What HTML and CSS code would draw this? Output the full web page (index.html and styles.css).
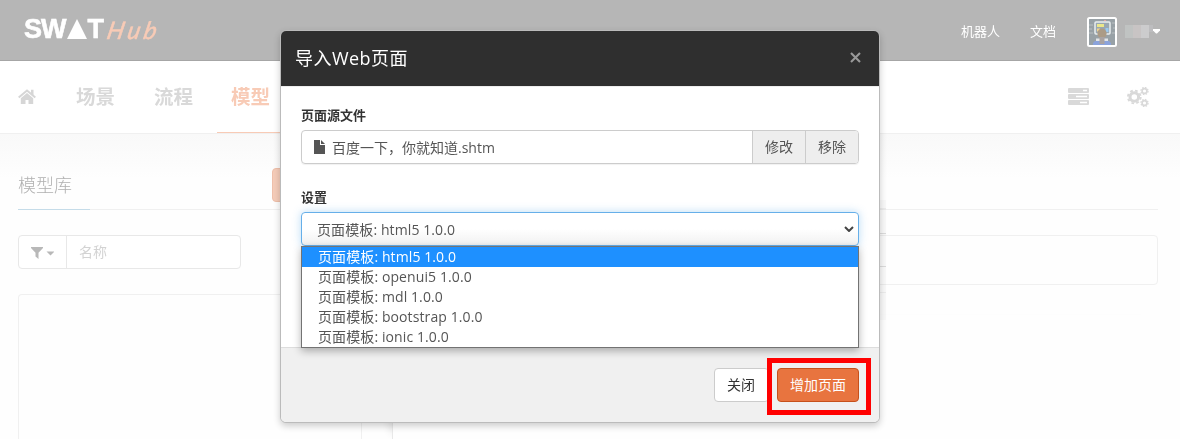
FILE: index.html
```html
<!DOCTYPE html>
<html lang="zh-CN">
<head>
<meta charset="utf-8">
<title>SWATHub</title>
<link rel="stylesheet" href="styles.css">
</head>
<body>
<header class="topbar">
  <div class="logo"><span class="logo-main">SW</span><svg class="logo-tri" width="20" height="20" viewBox="0 0 20 20"><path d="M10 0L20 20H0z" fill="#fff"/></svg><span class="logo-main">T</span><span class="logo-hub">Hub</span></div>
  <div class="user-nav">
    <a>机器人</a>
    <a>文档</a>
    <svg class="avatar" width="30" height="30" viewBox="0 0 30 30">
      <rect x="1" y="1" width="28" height="28" rx="1.500" fill="#98a1a6" stroke="#fff" stroke-width="2"/>
      <path d="M2 8h4M2 12h3M2 16h4M25 6h3M26 11h2M25 16h3" stroke="#b9bfc1" stroke-width="1"/>
      <rect x="8" y="5" width="15" height="12" rx="1" fill="#9aa8b2" stroke="#e9eef0" stroke-width="1.500"/>
      <path d="M10 8.500h7" stroke="#ebe78a" stroke-width="3"/><path d="M10 13h3" stroke="#f0d38f" stroke-width="3"/>
      <path d="M20 11v4" stroke="#9bc9ef" stroke-width="3"/><path d="M17 3.500h2" stroke="#e4a7a7"/>
      <path d="M6 28v-2l2-2h14l2 2v2z" fill="#8ba3dc"/>
      <path d="M9 21.500h12V24H9z" fill="#e2e4e6"/>
      <ellipse cx="15" cy="16.500" rx="4.600" ry="5" fill="#ab9b86"/><path d="M12.500 20h5v7h-5z" fill="#a9a3a3"/>
    </svg>
    <span class="user-name"><i class="px a"></i><i class="px b"></i><i class="px c"></i><i class="px d"></i></span>
    <svg class="caret" width="7" height="5" viewBox="0 0 7 5"><path d="M0 0h7v1.500L4 4.500H3L0 1.500z" fill="#fff"/></svg>
  </div>
</header>
<nav class="mainnav">
  <svg class="home" width="18" height="16" viewBox="0 0 18 16"><path d="M.7 8.600L9 1.500l8.300 7.100" fill="none" stroke="#d6d6d6" stroke-width="2"/><path d="M13 .8h2.500v6L13 4.500z" fill="#d6d6d6"/><path d="M2.800 9.200L9 4l6.200 5.200V15h-4.700v-4h-3v4H2.800z" fill="#d6d6d6"/></svg>
  <a>场景</a><a>流程</a><a class="active">模型</a>
  <div class="nav-icons">
    <svg width="21" height="17" viewBox="0 0 21 17"><g fill="#d9d9d9"><rect y="0" width="21" height="5" rx="1"/><rect y="6" width="21" height="5" rx="1"/><rect y="12" width="21" height="5" rx="1"/></g><path d="M15 2.500h4M8 8.500h11M12 14.500h7" stroke="#fff" stroke-width="1.300"/></svg>
    <svg width="22" height="20" viewBox="0 0 22 20"><g fill="none" stroke="#d9d9d9"><circle cx="7.300" cy="10" r="4.300" stroke-width="3"/><circle cx="7.300" cy="10" r="6.400" stroke-width="1.900" stroke-dasharray="2.700 2.327"/><circle cx="17.500" cy="4" r="2.400" stroke-width="1.700"/><circle cx="17.500" cy="4" r="3.600" stroke-width="1.200" stroke-dasharray="1.500 1.330"/><circle cx="17.500" cy="16" r="2.400" stroke-width="1.700"/><circle cx="17.500" cy="16" r="3.600" stroke-width="1.200" stroke-dasharray="1.500 1.330"/></g></svg>
  </div>
</nav>
<main class="page">
  <div class="title-row"><h1>模型库</h1><span class="add-btn"></span></div>
  <div class="columns">
    <section class="left">
      <div class="filter">
        <div class="filter-btn"><svg width="23" height="12" viewBox="0 0 23 12"><path d="M0 0h12v1L7.500 5.700V12l-3-2.500V5.700L0 1z" fill="#b8b8b8"/><path d="M15.500 4.500h8l-4 4z" fill="#b8b8b8"/></svg></div>
        <div class="filter-input">名称</div>
      </div>
      <div class="list"></div>
    </section>
    <section class="right"><div class="toolbar"></div><div class="canvas"></div></section>
  </div>
</main>

<div class="modal">
  <svg class="edge" width="6" height="120" viewBox="0 0 6 120"><path d="M0 0h6v120H0z" fill="#fafafa"/><path d="M0 8.500h6M0 92.500h6" stroke="#ededed"/><path d="M0 33.500h6M0 66.500h6" stroke="#dcdcdc"/></svg>
  <div class="modal-head"><h2>导入Web页面</h2><svg width="11" height="11" viewBox="0 0 11 11"><path d="M1 1l9 9M10 1l-9 9" stroke="#999" stroke-width="2.100"/></svg></div>
  <div class="modal-body">
    <label>页面源文件</label>
    <div class="file">
      <div class="file-name"><svg width="11" height="14" viewBox="0 0 11 14"><path d="M0 0h6v5h5v9H0z" fill="#555"/><path d="M7 0l4 4H7z" fill="#555"/></svg><span>百度一下，你就知道.shtm</span></div>
      <div class="file-btn">修改</div><div class="file-btn">移除</div>
    </div>
    <label>设置</label>
    <div class="select"><span>页面模板: html5 1.0.0</span><svg width="10" height="6" viewBox="0 0 10 6"><path d="M1 1l4 4 4-4" fill="none" stroke="#444" stroke-width="2"/></svg>
      <ul class="options"><li class="selected">页面模板: html5 1.0.0</li><li>页面模板: openui5 1.0.0</li><li>页面模板: mdl 1.0.0</li><li>页面模板: bootstrap 1.0.0</li><li>页面模板: ionic 1.0.0</li></ul>
    </div>
  </div>
  <div class="modal-foot"><div class="btn">关闭</div><div class="btn primary">增加页面<span class="highlight"></span></div></div>
</div>
</body>
</html>
```
FILE: styles.css
```css
* { box-sizing: border-box; }
body { margin: 0; width: 1180px; height: 439px; overflow: hidden; position: relative; background: #fefefe; color: #555; font: 14px/20px "Open Sans", "Noto Sans CJK SC", sans-serif; }
h1, h2, ul { margin: 0; padding: 0; font-weight: normal; list-style: none; }
svg { display: block; flex: none; }
.topbar { height: 61px; background: #b6b6b6; border-bottom: 1px solid #a6a6a6; display: flex; justify-content: space-between; padding: 0 20px 0 24px; }
.logo { display: flex; height: 20px; margin-top: 19px; color: #fff; }
.logo-main { font: bold 27px/20px "Liberation Sans", sans-serif; letter-spacing: -1px; -webkit-text-stroke: .6px #fff; }
.logo-tri { margin: 0 1px; }
.logo-hub { font: italic 24px/21px Lato, sans-serif; color: #f8cbb6; margin-left: 5px; transform: skewX(-12deg); letter-spacing: 3.5px; -webkit-text-stroke: .5px #f8cbb6; }
.user-nav { display: flex; align-items: center; height: 63px; color: #fff; font-size: 13px; }
.user-nav a { margin-right: 30px; height: 22px; }
.user-nav .avatar { margin-left: 1px; }
.user-name { display: flex; width: 28px; height: 13px; margin-left: 8px; }
.px { width: 8px; height: 13px; }
.a { background: #c0c3c2; }
.b { background: #c8c4c4; }
.c { background: #cccccd; }
.d { width: 4px; height: 7px; background: #bdbdbf; }
.mainnav { height: 73px; background: #fff; border-bottom: 1px solid #f0f0f0; display: flex; padding: 0 31px 0 18px; font-size: 19.5px; font-weight: bold; color: #d9d9d9; line-height: 71px; }
.home { margin: 28px 24px 0 0; }
.mainnav a { height: 72px; padding: 0 16px; margin-right: 7px; }
.mainnav .active { color: #f8cbb6; border-bottom: 1px solid #f8cbb6; padding: 0 14px; margin: 0 0 0 1px; }
.nav-icons { display: flex; align-items: center; gap: 38px; margin-left: auto; height: 71px; }
.page { height: 305px; overflow: hidden; padding: 34px 22px 0 18px; background: linear-gradient(#f9f9f9, #fefefe 45px); }
.title-row { height: 42px; display: flex; border-bottom: 1px solid #f0f0f0; }
.title-row h1 { width: 72px; height: 42px; border-bottom: 1px solid #c5dce9; font-size: 18px; font-weight: 300; line-height: 34px; color: #b0b0b0; }
.add-btn { width: 82px; height: 34px; margin-left: 182px; background: #f5ccb9; border: 1px solid #eebfaa; border-radius: 4px; }
.columns { display: flex; gap: 30px; padding-top: 25px; height: 229px; }
.left { width: 344px; }
.filter { width: 223px; height: 34px; display: flex; border: 1px solid #e8e8e8; border-radius: 4px; background: #fff; }
.filter-btn { width: 48px; padding: 11px 12px; border-right: 1px solid #e8e8e8; }
.filter-input { padding: 6px 12px; color: #d3d3d3; }
.list { height: 145px; margin-top: 25px; border: 1px solid #f0f0f0; border-bottom: 0; border-radius: 4px 4px 0 0; }
.right { flex: 1; }
.toolbar { height: 50px; border: 1px solid #f0f0f0; border-radius: 4px; }
.canvas { height: 124px; margin-top: 30px; border-left: 1px solid #e8e8e8; box-shadow: -8px 0 8px -6px #e9e9e9; }
.modal { position: absolute; left: 280px; top: 30px; width: 600px; height: 393px; border: 1px solid #bbb; border-radius: 6px; background: #fff; box-shadow: 0 3px 7px rgba(0,0,0,.2); background-clip: padding-box; }
.edge { position: absolute; left: 599px; top: 169px; mix-blend-mode: multiply; }
.modal-head { height: 56px; display: flex; align-items: center; justify-content: space-between; padding: 0 18px 0 14px; color: #fff; background: #2f2f2f; border-bottom: 1px solid #eee; border-radius: 5px 5px 0 0; }
.modal-head svg { margin-top: -3px; }
.modal-head h2 { font-size: 18px; letter-spacing: .45px; line-height: 24px; height: 26px; }
.modal-body { height: 260px; padding: 18px 20px 0; }
.modal-body label { display: block; height: 25px; color: #333; font-size: 13px; font-weight: 600; }
.file { height: 34px; margin-bottom: 23px; display: flex; border: 1px solid #ccc; border-radius: 4px; box-shadow: 0 1px 1px rgba(0,0,0,.06); padding-left: 12px; line-height: 32px; }
.file-name { flex: 1; display: flex; align-items: center; gap: 7px; padding-top: 1px; }
.file-name svg { margin-top: -1px; }
.file-btn { width: 53px; border-left: 1px solid #ccc; background: #eee; text-align: center; }
.file-btn:last-child { border-radius: 0 3px 3px 0; }
.select { position: relative; height: 34px; border: 1px solid #66afe9; border-radius: 4px; display: flex; align-items: center; justify-content: space-between; padding: 0 4px 0 15px; letter-spacing: .1px; box-shadow: 0 0 8px rgba(102,175,233,.45); background: linear-gradient(#fff 50%, #f1f1f1); }
.select > span { padding-top: 1px; }
.options { position: absolute; left: -1px; top: 33px; width: 558px; height: 102px; border: 1px solid #737373; background: #fff; box-shadow: 0 3px 8px rgba(0,0,0,.3); }
.options li { height: 20px; padding-left: 16px; }
.options .selected { background: #1e90ff; color: #fff; }
.modal-foot { height: 75px; border-top: 1px solid #ddd; border-radius: 0 0 5px 5px; background: #f0f0f0; display: flex; justify-content: flex-end; gap: 8px; padding: 20px 20px 0; }
.btn { width: 55px; height: 34px; padding: 0 12px; border: 1px solid #ccc; border-radius: 4px; background: #fff; line-height: 32px; color: #333; }
.primary { position: relative; width: 82px; background: #e8743f; border-color: #c6501b; color: #fff; }
.highlight { position: absolute; left: -11px; top: -11px; width: 104px; height: 57px; border: 5px solid #f00; }
```
